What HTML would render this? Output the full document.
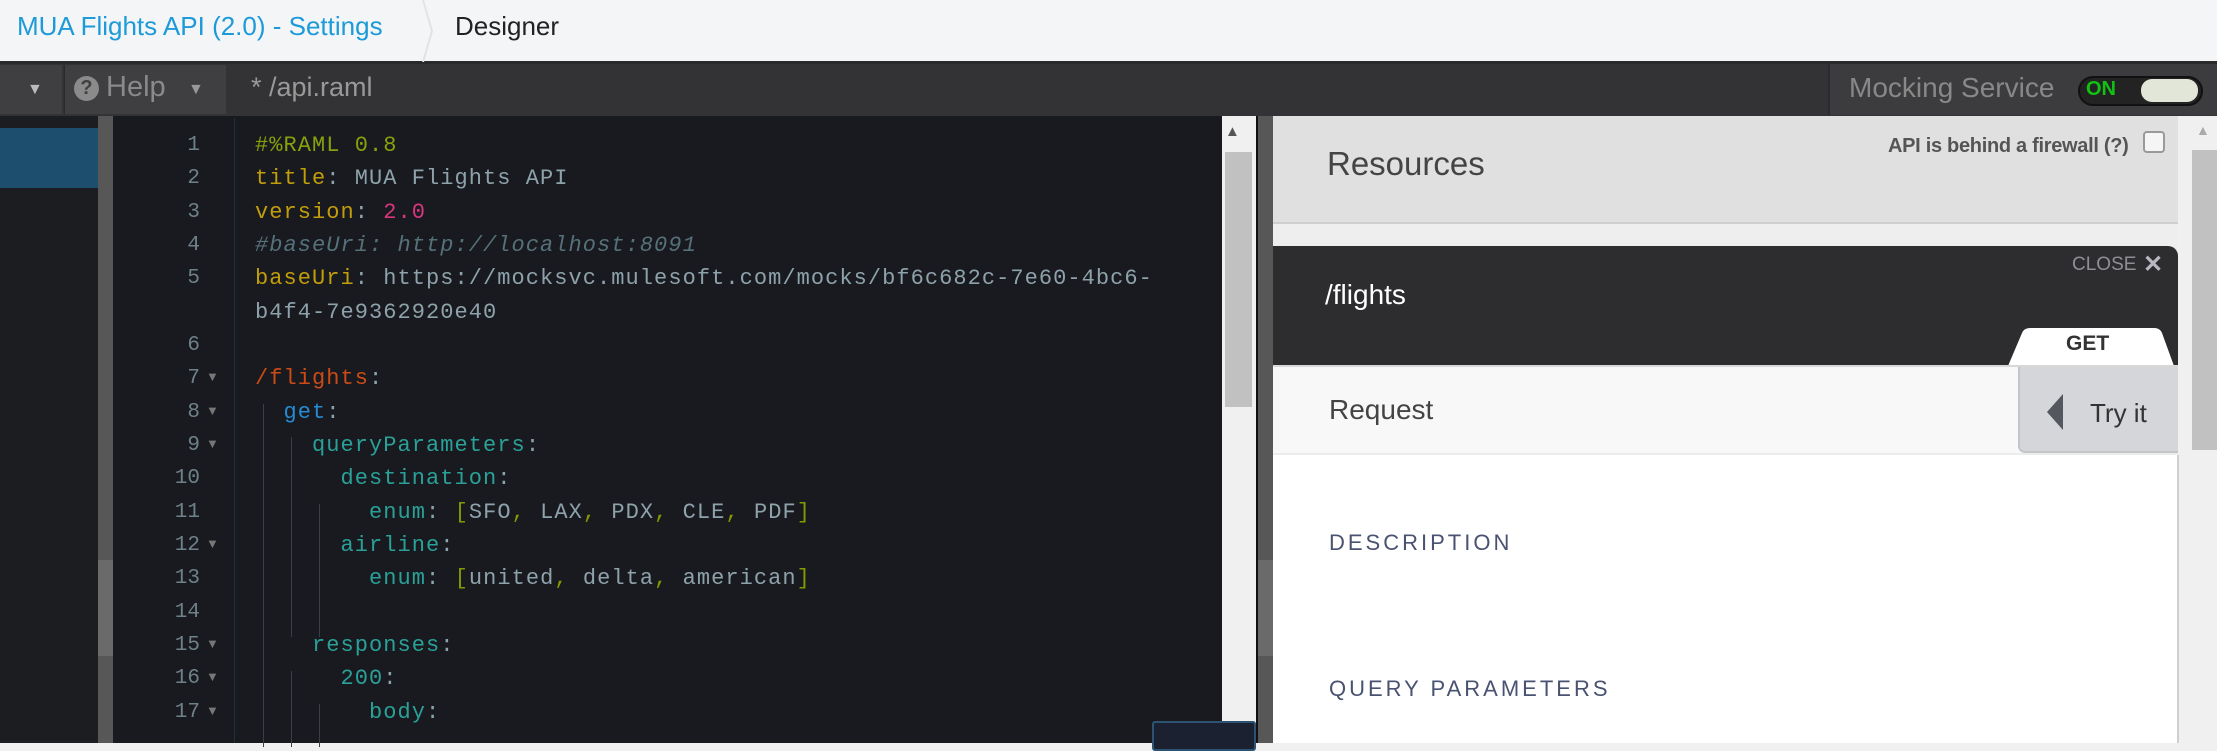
<!DOCTYPE html>
<html><head><meta charset="utf-8"><style>
*{box-sizing:border-box;margin:0;padding:0}
body{width:2217px;height:743px;overflow:hidden;background:#f0f0f0;font-family:"Liberation Sans",sans-serif;position:relative}
.a{position:absolute}
.code{font-family:"Liberation Mono",monospace;font-size:22px;letter-spacing:1.05px;white-space:pre;line-height:33.3px}
.ln{position:absolute;left:108px;width:92px;text-align:right;color:#6f8188;font-family:"Liberation Mono",monospace;font-size:21px;line-height:33.3px}
.fold{position:absolute;left:206px;color:#777;font-size:13px}
.k{color:#c29d0a}.v{color:#8ea2ab}.n{color:#d8367e}.c{color:#56707a;font-style:italic}.g{color:#86a10a}.o{color:#cb4b16}.b{color:#268bd2}.t{color:#2aa198}.y{color:#859900}
.gd{position:absolute;width:1px;background:#3a3f45}
#ed{position:absolute;left:0;top:4px}
</style></head><body>
<div class="a" style="left:0;top:0;width:2217px;height:62px;background:#f4f5f7"></div>
<div class="a" style="left:0;top:61px;width:2217px;height:3px;background:#2a2a2a"></div>
<div class="a" style="left:17px;top:11px;font-size:26px;color:#1d9ad8">MUA Flights API (2.0) - Settings</div>
<svg class="a" style="left:420px;top:0" width="20" height="62"><path d="M3 0 L12 31 L3 62" stroke="#e2e3e6" stroke-width="2" fill="none"/></svg>
<div class="a" style="left:455px;top:11px;font-size:26px;color:#222">Designer</div>
<div class="a" style="left:0;top:64px;width:2217px;height:52px;background:#333335"></div>
<div class="a" style="left:0;top:65px;width:62px;height:49px;background:#3f3f42"></div>
<div class="a" style="left:27px;top:81px;color:#bbb;font-size:16px">▼</div>
<div class="a" style="left:64px;top:65px;width:162px;height:49px;background:#3f3f42;border-left:1px solid #2a2a2a"></div>
<div class="a" style="left:74px;top:76px;width:25px;height:25px;border-radius:50%;background:#8a8a8a;color:#3f3f42;font-weight:bold;font-size:20px;text-align:center;line-height:25px">?</div>
<div class="a" style="left:106px;top:71px;color:#8a8a8a;font-size:29px">Help</div>
<div class="a" style="left:188px;top:81px;color:#999;font-size:16px">▼</div>
<div class="a" style="left:251px;top:72px;color:#999;font-size:27px">* /api.raml</div>
<div class="a" style="left:1828px;top:64px;width:389px;height:51px;background:#3c3c3e;border-left:2px solid #2a2a35"></div>
<div class="a" style="left:1849px;top:72px;color:#888;font-size:28px">Mocking Service</div>
<div class="a" style="left:2078px;top:76px;width:125px;height:30px;border-radius:15px;background:#232323;border:2px solid #111"></div>
<div class="a" style="left:2086px;top:78px;color:#12c212;font-weight:bold;font-size:20px">ON</div>
<div class="a" style="left:2141px;top:79px;width:57px;height:23px;border-radius:11px;background:#e2e6d8"></div>
<div class="a" style="left:0;top:116px;width:98px;height:627px;background:#1b1d21"></div>
<div class="a" style="left:0;top:128px;width:98px;height:60px;background:#1d4e6d"></div>
<div class="a" style="left:98px;top:116px;width:15px;height:627px;background:#575757"></div>
<div class="a" style="left:98px;top:560px;width:15px;height:96px;background:#6a6a6a"></div>
<div class="a" style="left:113px;top:116px;width:1109px;height:627px;background:#181a1f"></div>
<div class="a" style="left:234px;top:118px;width:1px;height:625px;background:#1e3338"></div>
<div class="a" style="left:1222px;top:117px;width:34px;height:626px;background:#f0f0f0"></div>
<div class="a" style="left:1225px;top:123px;color:#555;font-size:15px">▲</div>
<div class="a" style="left:1225px;top:152px;width:27px;height:255px;background:#c1c1c1"></div>
<div class="a" style="left:1256px;top:116px;width:2px;height:627px;background:#111"></div>
<div class="a" style="left:1258px;top:116px;width:15px;height:627px;background:#575757"></div>
<div class="a" style="left:1258px;top:560px;width:15px;height:96px;background:#6a6a6a"></div>

<div class="gd" style="left:263px;top:404px;height:343px"></div>
<div class="gd" style="left:291px;top:437px;height:200px"></div>
<div class="gd" style="left:319px;top:504px;height:100px"></div>
<div class="gd" style="left:319px;top:571px;height:66px"></div>
<div class="gd" style="left:291px;top:671px;height:76px"></div>
<div class="gd" style="left:319px;top:704px;height:43px"></div>

<div id="ed">
<div class="ln" style="top:125px">1</div><div class="a code" style="left:255px;top:125px"><span class="g">#%RAML 0.8</span></div>
<div class="ln" style="top:158px">2</div><div class="a code" style="left:255px;top:158px"><span class="k">title</span><span class="v">: MUA Flights API</span></div>
<div class="ln" style="top:192px">3</div><div class="a code" style="left:255px;top:192px"><span class="k">version</span><span class="v">: </span><span class="n">2.0</span></div>
<div class="ln" style="top:225px">4</div><div class="a code" style="left:255px;top:225px"><span class="c">#baseUri: http://localhost:8091</span></div>
<div class="ln" style="top:258px">5</div><div class="a code" style="left:255px;top:258px"><span class="k">baseUri</span><span class="v">: https://mocksvc.mulesoft.com/mocks/bf6c682c-7e60-4bc6-</span></div>
<div class="a code" style="left:255px;top:292px"><span class="v">b4f4-7e9362920e40</span></div>
<div class="ln" style="top:325px">6</div>
<div class="ln" style="top:358px">7</div><div class="fold" style="top:365px">▼</div><div class="a code" style="left:255px;top:358px"><span class="o">/flights</span><span class="v">:</span></div>
<div class="ln" style="top:392px">8</div><div class="fold" style="top:399px">▼</div><div class="a code" style="left:255px;top:392px">  <span class="b">get</span><span class="v">:</span></div>
<div class="ln" style="top:425px">9</div><div class="fold" style="top:432px">▼</div><div class="a code" style="left:255px;top:425px">    <span class="t">queryParameters</span><span class="v">:</span></div>
<div class="ln" style="top:458px">10</div><div class="a code" style="left:255px;top:458px">      <span class="t">destination</span><span class="v">:</span></div>
<div class="ln" style="top:492px">11</div><div class="a code" style="left:255px;top:492px">        <span class="t">enum</span><span class="v">: </span><span class="y">[</span><span class="v">SFO</span><span class="y">,</span><span class="v"> LAX</span><span class="y">,</span><span class="v"> PDX</span><span class="y">,</span><span class="v"> CLE</span><span class="y">,</span><span class="v"> PDF</span><span class="y">]</span></div>
<div class="ln" style="top:525px">12</div><div class="fold" style="top:532px">▼</div><div class="a code" style="left:255px;top:525px">      <span class="t">airline</span><span class="v">:</span></div>
<div class="ln" style="top:558px">13</div><div class="a code" style="left:255px;top:558px">        <span class="t">enum</span><span class="v">: </span><span class="y">[</span><span class="v">united</span><span class="y">,</span><span class="v"> delta</span><span class="y">,</span><span class="v"> american</span><span class="y">]</span></div>
<div class="ln" style="top:592px">14</div>
<div class="ln" style="top:625px">15</div><div class="fold" style="top:632px">▼</div><div class="a code" style="left:255px;top:625px">    <span class="t">responses</span><span class="v">:</span></div>
<div class="ln" style="top:658px">16</div><div class="fold" style="top:665px">▼</div><div class="a code" style="left:255px;top:658px">      <span class="t">200</span><span class="v">:</span></div>
<div class="ln" style="top:692px">17</div><div class="fold" style="top:699px">▼</div><div class="a code" style="left:255px;top:692px">        <span class="t">body</span><span class="v">:</span></div>
</div>
<div class="a" style="left:1152px;top:721px;width:104px;height:30px;background:#1b2130;border:2px solid #2c5472;border-radius:3px"></div>

<div class="a" style="left:1273px;top:116px;width:905px;height:627px;background:#eeeeee"></div>
<div class="a" style="left:1273px;top:116px;width:905px;height:108px;background:#e0e0e0;border-bottom:2px solid #cfcfcf"></div>
<div class="a" style="left:1327px;top:145px;font-size:33px;color:#444">Resources</div>
<div class="a" style="left:1888px;top:135px;font-size:20px;color:#555;font-weight:bold;letter-spacing:-0.3px">API is behind a firewall (?)</div>
<div class="a" style="left:2143px;top:131px;width:22px;height:22px;border:2px solid #999;border-radius:4px;background:#f5f5f5"></div>
<div class="a" style="left:1273px;top:246px;width:905px;height:119px;background:#2d2d30;border-top-right-radius:10px"></div>
<div class="a" style="left:1325px;top:279px;font-size:28px;color:#fff">/flights</div>
<div class="a" style="left:2072px;top:254px;font-size:19px;color:#8e8e96">CLOSE</div>
<div class="a" style="left:2143px;top:250px;font-size:24px;color:#b8b8c0;font-weight:bold">✕</div>
<svg class="a" style="left:2008px;top:328px" width="168" height="38"><path d="M14 5 Q16 0 22 0 L146 0 Q152 0 154 5 L166 38 L0 38 Z" fill="#fff"/></svg>
<div class="a" style="left:2066px;top:332px;font-size:21px;color:#333;font-weight:bold">GET</div>
<div class="a" style="left:1273px;top:365px;width:905px;height:90px;background:#f8f8f8;border-top:2px solid #d8d8d8;border-bottom:2px solid #ececec"></div>
<div class="a" style="left:1329px;top:394px;font-size:28px;color:#444">Request</div>
<div class="a" style="left:2018px;top:367px;width:160px;height:86px;background:#d5d6d9;border:2px solid #c4c5c8;border-right:none;border-top:none;border-radius:0 0 0 7px"></div>
<svg class="a" style="left:2047px;top:394px" width="16" height="36"><path d="M16 0 L0 18 L16 36Z" fill="#55575f"/></svg>
<div class="a" style="left:2090px;top:398px;font-size:26px;color:#333">Try it</div>
<div class="a" style="left:1273px;top:455px;width:905px;height:288px;background:#fff"></div>
<div class="a" style="left:2177px;top:455px;width:2px;height:288px;background:#cfcfcf"></div>
<div class="a" style="left:1329px;top:530px;font-size:22px;color:#4a5272;letter-spacing:3px">DESCRIPTION</div>
<div class="a" style="left:1329px;top:676px;font-size:22px;color:#4a5272;letter-spacing:3px">QUERY PARAMETERS</div>
<div class="a" style="left:2179px;top:116px;width:38px;height:627px;background:#f0f0f0"></div>
<div class="a" style="left:2196px;top:122px;color:#aaa;font-size:14px">▲</div>
<div class="a" style="left:2192px;top:150px;width:25px;height:300px;background:#c1c1c1"></div>
</body></html>
